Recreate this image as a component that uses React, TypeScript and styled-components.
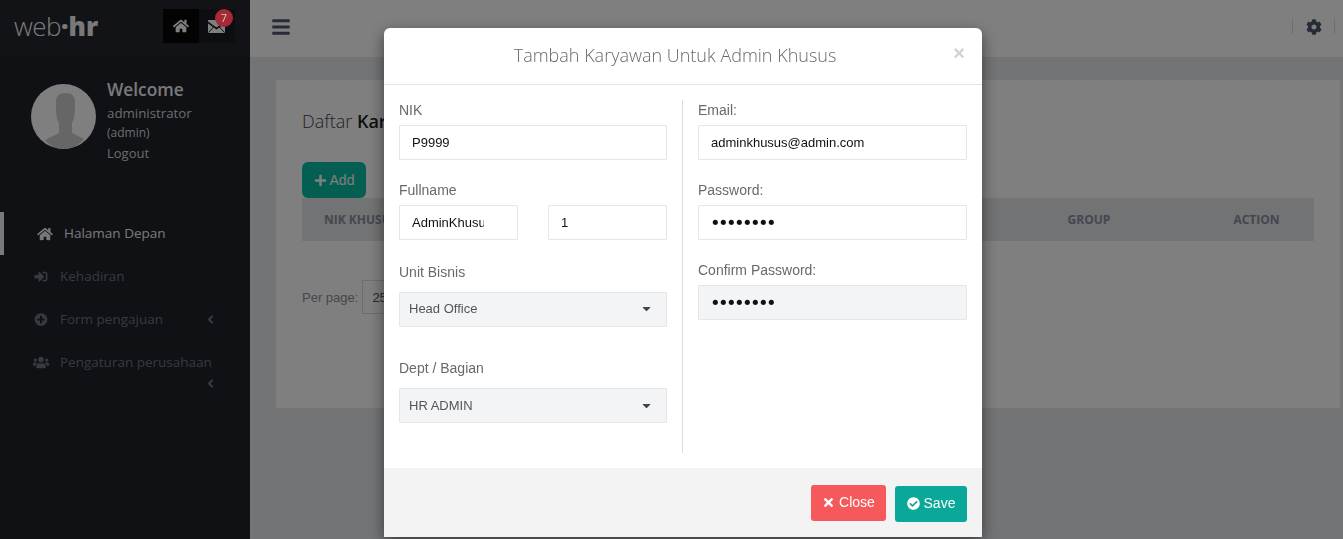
import React from "react";
import styled, { createGlobalStyle } from "styled-components";
import {
  FaHome, FaSignInAlt, FaPlusCircle, FaUsers, FaAngleLeft, FaBars, FaCog, FaPlus, FaTimes, FaCheckCircle, FaCaretDown,
} from "react-icons/fa";

const Global = createGlobalStyle`
  html, body { margin: 0; height: 100%; overflow: hidden; }
  body { font-family: "Open Sans", "Liberation Sans", sans-serif; background: #e7e9ec; }
  * { box-sizing: border-box; }
`;

const Page = styled.div`display: flex; height: 100vh;`;

const Sidebar = styled.aside`
  width: 250px; flex: none; background: #1f222b; display: flex; flex-direction: column;
`;
const Brand = styled.div`
  height: 57px; background: #23262f; display: flex; align-items: flex-start; padding: 9px 15px 0 14px;
`;
const Logo = styled.div`
  width: 149px; color: #fff; font-size: 26px; line-height: 34px; font-weight: 300; letter-spacing: -0.5px; opacity: .95;
  b { font-weight: 800; letter-spacing: 0; }
`;
const TopIcon = styled.div<{ $active?: boolean }>`
  position: relative; width: 36px; height: 34px; display: flex; align-items: center; justify-content: center;
  color: #fff; font-size: 16px; background: ${p => (p.$active ? "#060708" : "#1a1c23")};
`;
const MailGlyph = styled.svg`width: 17px; height: 13px; margin: 0 2px 0 0;`;
const Badge = styled.span`
  position: absolute; z-index: 1; top: 0; right: 2px; width: 18px; height: 18px; border-radius: 50%; background: #a62a35; color: #d8c4c6;
  font-size: 11px; line-height: 18px; text-align: center;
`;
const Profile = styled.div`display: flex; padding: 19px 0 0 31px; gap: 11px; height: 155px;`;
const Avatar = styled.svg`width: 65px; height: 65px; margin-top: 8px; flex: none;`;
const ProfileText = styled.div`color: #d5d7da; display: flex; flex-direction: column; padding-top: 2px;`;
const Welcome = styled.div`font-size: 17.3px; line-height: 24px; font-weight: 600; color: #fff; opacity: .95;`;
const UserName = styled.div`font-size: 13.3px; line-height: 22px;`;
const Role = styled.div`font-size: 12px; line-height: 16px; margin-top: 1px;`;
const Logout = styled.div`font-size: 13px; line-height: 26px; margin-top: -1px;`;

const Nav = styled.nav`display: flex; flex-direction: column;`;
const NavItem = styled.div<{ $active?: boolean }>`
  min-height: 43px; display: flex; flex-wrap: wrap; align-items: center; align-content: flex-start; font-size: 13.5px;
  padding-left: 22px;
  color: ${p => (p.$active ? "#f0f1f3" : "#6c7480")};
  border-left: ${p => (p.$active ? "4px solid #f5f5f5" : "none")};
  svg.lead { font-size: ${p => (p.$active ? "14px" : "13px")}; width: 38px; flex: none; }
`;
const NavLabel = styled.span`line-height: 43px;`;
const Chevron = styled(FaAngleLeft)`
  font-size: 13px; margin-left: auto; margin-right: 33px;
`;
const WrapChevron = styled.div`
  width: 100%; height: 14px; display: flex; justify-content: flex-end; padding-right: 33px; font-size: 13px; margin-top: -7px;
`;

const Main = styled.main`flex: 1; display: flex; flex-direction: column; min-width: 0;`;
const TopBar = styled.header`
  height: 57px; background: #fff; display: flex; align-items: center; justify-content: space-between;
  padding: 0 8px 4px 21px; color: #4f566b;
`;
const GearBox = styled.div`
  width: 43px; height: 15px; display: flex; align-items: center; justify-content: center; font-size: 16px;
  border-left: 1px solid #ddd; border-right: 1px solid #ddd;
`;
const Content = styled.div`flex: 1; padding: 23px 3px 0 26px;`;
const Card = styled.section`
  height: 328px; background: #fff; padding: 29px 26px 0;
`;
const CardTitle = styled.h2`
  margin: 0; font-size: 18px; line-height: 24px; font-weight: 300; color: #3f4450;
  strong { font-weight: 600; color: #1d1f25; }
`;
const AddButton = styled.div`
  margin-top: 29px; width: 64px; height: 36px; border-radius: 6px; background: #0abca4;
  display: flex; align-items: center; justify-content: center; gap: 3px;
  font: 14px "Liberation Sans", sans-serif; color: #fff;
`;
const TableHead = styled.div`
  height: 43px; background: #e5e6e8; display: grid; grid-template-columns: 677px 220px 115px; align-items: center;
  font-size: 12px; font-weight: 700; color: #8590a2;
`;
const HeadCell = styled.div<{ $first?: boolean }>`
  text-align: ${p => (p.$first ? "left" : "center")};
  padding-left: ${p => (p.$first ? "22px" : "0")};
`;
const Pager = styled.div`
  margin-top: 39px; display: flex; align-items: center; gap: 4px; font: 13px "Liberation Sans", sans-serif; color: #8a8f99;
`;
const PagerBox = styled.div`
  width: 60px; height: 34px; border: 1px solid #ddd; display: flex; align-items: center; padding-left: 9px; color: #555; font-size: 13px;
`;

const Backdrop = styled.div`position: fixed; inset: 0; background: rgba(0, 0, 0, .5);`;
const Modal = styled.div`
  position: fixed; top: 28px; left: 384px; width: 598px; height: 509px; background: #fff; border-radius: 6px 6px 0 0;
  box-shadow: 0 5px 15px rgba(0, 0, 0, .5); display: flex; flex-direction: column; overflow: hidden;
  font-family: "Liberation Sans", Arial, sans-serif;
`;
const ModalHeader = styled.div`
  height: 57px; flex: none; border-bottom: 1px solid #e5e5e5; display: flex; align-items: center; padding: 0 15px 2px;
`;
const ModalTitle = styled.h4`
  flex: 1; margin: 0; text-align: center; font: 300 18px/24px "Open Sans", sans-serif; color: #676a6c;
`;
const CloseX = styled.span`
  width: 16px; margin-top: -5px; text-align: center; font: 700 20px/20px "Liberation Sans", sans-serif; color: #d2d2d2;
`;
const ModalBody = styled.div`
  flex: 1; display: grid; grid-template-columns: 284px 1fr; padding: 15px;
`;
const LeftCol = styled.div`border-right: 1px solid #ddd; padding-right: 15px;`;
const RightCol = styled.div`padding-left: 15px;`;
const Label = styled.label<{ $gap?: number; $after?: number }>`
  display: block; font-size: 14px; line-height: 20px; color: #676a6c;
  margin-top: ${p => p.$gap ?? 20}px; margin-bottom: ${p => p.$after ?? 5}px;
`;
const Input = styled.input<{ $muted?: boolean; $clip?: boolean; $dots?: boolean }>`
  display: block; width: 100%; height: 35px; border: 1px solid #e5e6e7; border-radius: 1px; outline: none;
  padding: 0 ${p => (p.$clip ? "33px" : "12px")} 0 ${p => (p.$dots ? "11px" : "12px")}; color: #111;
  font: ${p => (p.$dots ? '18px "DejaVu Sans", sans-serif' : '13px "Liberation Sans", Arial, sans-serif')};
  letter-spacing: ${p => (p.$dots ? "-2.6px" : "0")};
  background: ${p => (p.$muted ? "#f3f4f6" : "#fff")};
`;
const NameRow = styled.div`display: grid; grid-template-columns: 119px 119px; justify-content: space-between;`;
const Select = styled.div<{ $lift?: boolean }>`
  height: 35px; border: 1px solid #e5e6e7; background: #f3f4f6; border-radius: 1px; display: flex; align-items: center;
  justify-content: space-between; padding: 0 13px 0 9px; font-size: 13px; color: #555;
  padding-bottom: ${p => (p.$lift ? "2px" : "0")};
  svg { font-size: 13px; color: #444; }
`;
const ModalFooter = styled.div`
  height: 69px; flex: none; background: #f3f3f4; display: flex; justify-content: flex-end; align-items: flex-start; gap: 9px; padding: 17px 15px 0;
`;
const FootButton = styled.div<{ $tone: "close" | "save" }>`
  height: 36px; border-radius: 3px; color: #fff; display: flex; align-items: center; justify-content: center; gap: 4px; font-size: 14px;
  padding-bottom: 2px;
  width: ${p => (p.$tone === "close" ? "75px" : "72px")};
  margin-top: ${p => (p.$tone === "close" ? "0" : "1px")};
  background: ${p => (p.$tone === "close" ? "#f6595b" : "#0aa898")};
`;

export default function App() {
  return (
    <>
      <Global />
      <Page>
        <Sidebar>
          <Brand>
            <Logo>web<b>·hr</b></Logo>
            <TopIcon $active><FaHome /></TopIcon>
            <TopIcon>
              <MailGlyph viewBox="0 0 17 13">
                <path d="M0 0 H17 V1.5 L8.5 7.5 L0 1.5 Z M0 3.5 L8.5 9.5 L17 3.5 V13 H0 Z" fill="#fff" />
                <path d="M0.5 12.5 L6 6.5 M16.5 12.5 L11 6.5" stroke="#1a1c23" strokeWidth="1" fill="none" />
              </MailGlyph>
              <Badge>7</Badge>
            </TopIcon>
          </Brand>
          <Profile>
            <Avatar viewBox="0 0 65 65">
              <circle cx="32.5" cy="32.5" r="32.5" fill="#fff" />
              <path d="M14 56 L28 49 L28 39 C25 34 25 28 25 18 C25 12 28 9 34.5 9 C41 9 44 12 44 18 C44 28 44 34 41 39 L41 49 L53 55 C47 62 40 65 33 65 C25 65 19 62 14 56 Z" fill="#cccccc" />
            </Avatar>
            <ProfileText>
              <Welcome>Welcome</Welcome>
              <UserName>administrator</UserName>
              <Role>(admin)</Role>
              <Logout>Logout</Logout>
            </ProfileText>
          </Profile>
          <Nav>
            <NavItem $active><FaHome className="lead" /><NavLabel>Halaman Depan</NavLabel></NavItem>
            <NavItem><FaSignInAlt className="lead" /><NavLabel>Kehadiran</NavLabel></NavItem>
            <NavItem><FaPlusCircle className="lead" /><NavLabel>Form pengajuan</NavLabel><Chevron /></NavItem>
            <NavItem>
              <FaUsers className="lead" /><NavLabel>Pengaturan perusahaan</NavLabel>
              <WrapChevron><FaAngleLeft /></WrapChevron>
            </NavItem>
          </Nav>
        </Sidebar>
        <Main>
          <TopBar>
            <FaBars size={20} />
            <GearBox><FaCog /></GearBox>
          </TopBar>
          <Content>
            <Card>
              <CardTitle>Daftar <strong>Karyawan Admin Khusus</strong></CardTitle>
              <AddButton><FaPlus size={13} />Add</AddButton>
              <TableHead>
                <HeadCell $first>NIK KHUSUS</HeadCell>
                <HeadCell>GROUP</HeadCell>
                <HeadCell>ACTION</HeadCell>
              </TableHead>
              <Pager>Per page: <PagerBox>25</PagerBox></Pager>
            </Card>
          </Content>
        </Main>
      </Page>
      <Backdrop />
      <Modal>
        <ModalHeader>
          <ModalTitle>Tambah Karyawan Untuk Admin Khusus</ModalTitle>
          <CloseX>×</CloseX>
        </ModalHeader>
        <ModalBody>
          <LeftCol>
            <Label $gap={0}>NIK</Label>
            <Input readOnly value="P9999" />
            <Label>Fullname</Label>
            <NameRow>
              <Input readOnly $clip value="AdminKhusus" />
              <Input readOnly value="1" />
            </NameRow>
            <Label $gap={22} $after={10}>Unit Bisnis</Label>
            <Select $lift>Head Office<FaCaretDown /></Select>
            <Label $gap={31} $after={10}>Dept / Bagian</Label>
            <Select>HR ADMIN<FaCaretDown /></Select>
          </LeftCol>
          <RightCol>
            <Label $gap={0}>Email:</Label>
            <Input readOnly value="adminkhusus@admin.com" />
            <Label>Password:</Label>
            <Input readOnly $dots type="password" value="12345678" />
            <Label>Confirm Password:</Label>
            <Input readOnly $dots $muted type="password" value="12345678" />
          </RightCol>
        </ModalBody>
        <ModalFooter>
          <FootButton $tone="close"><FaTimes size={13} />Close</FootButton>
          <FootButton $tone="save"><FaCheckCircle size={13} />Save</FootButton>
        </ModalFooter>
      </Modal>
    </>
  );
}
